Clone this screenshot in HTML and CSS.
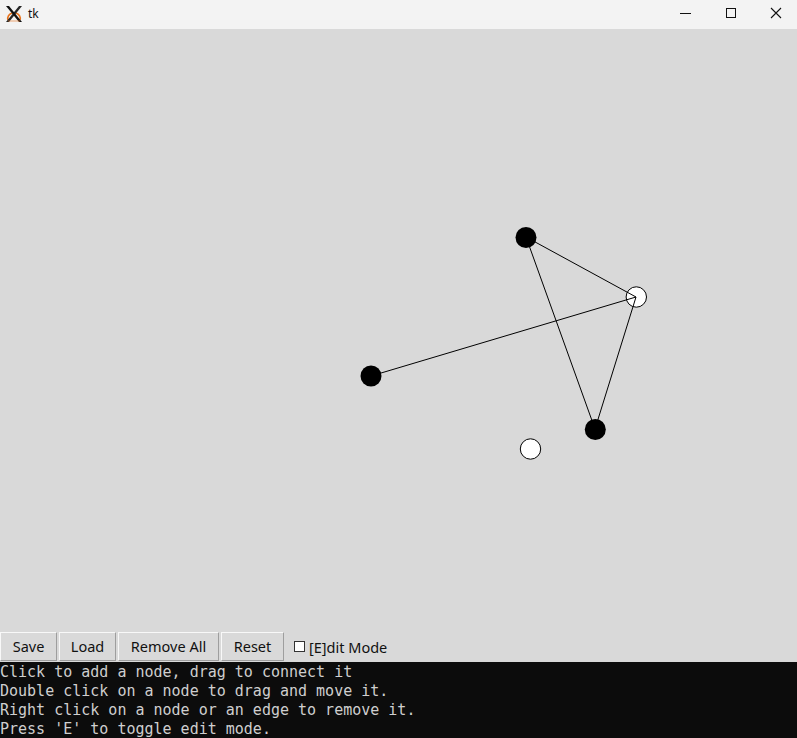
FILE: index.html
```html
<!DOCTYPE html>
<html>
<head>
<meta charset="utf-8">
<link rel="stylesheet" href="styles.css">
</head>
<body>
<div class="window">
  <div class="titlebar">
    <svg class="appicon" width="18" height="18" viewBox="0 0 18 18">
      <path d="M3 15 C 2 12, 4 9, 7 8" stroke="#e8731c" stroke-width="1.6" fill="none"/>
      <path d="M15 15 C 16 12, 14 9, 11 8" stroke="#e8731c" stroke-width="1.6" fill="none"/>
      <path d="M1 1 L4 1 L17 17 L14 17 Z" fill="#111"/>
      <path d="M14 1 L17 1 L4 17 L1 17 Z" fill="#111" opacity="0.9"/>
      <path d="M3 16 L15 16" stroke="#e8731c" stroke-width="1" opacity="0.6"/>
    </svg>
    <span class="title">tk</span>
    <div class="controls">
      <svg class="ctl" width="45" height="29" viewBox="0 0 45 29"><path d="M18 13.5 H29" stroke="#111" stroke-width="1"/></svg>
      <svg class="ctl" width="45" height="29" viewBox="0 0 45 29"><rect x="19.5" y="8.5" width="9" height="9" stroke="#111" fill="none" stroke-width="1"/></svg>
      <svg class="ctl" width="45" height="29" viewBox="0 0 45 29"><path d="M19 8 L29 18 M29 8 L19 18" stroke="#111" stroke-width="1.1"/></svg>
    </div>
  </div>
  <div class="canvas">
    <svg width="797" height="603" viewBox="0 29 797 603">
      <circle cx="636.3" cy="297" r="10.2" fill="#fff" stroke="#000" stroke-width="1"/>
      <circle cx="530.5" cy="449" r="10.2" fill="#fff" stroke="#000" stroke-width="1"/>
      <g stroke="#000" stroke-width="1">
        <line x1="526" y1="237" x2="636" y2="297"/>
        <line x1="526" y1="237" x2="595" y2="429"/>
        <line x1="371" y1="376" x2="636" y2="297"/>
        <line x1="595" y1="429" x2="636" y2="297"/>
      </g>
      <circle cx="526" cy="237.5" r="10.5" fill="#000"/>
      <circle cx="371" cy="376" r="10.5" fill="#000"/>
      <circle cx="595.3" cy="429.5" r="10.5" fill="#000"/>
    </svg>
  </div>
  <div class="toolbar">
    <button class="btn btn-save">Save</button>
    <button class="btn btn-load">Load</button>
    <button class="btn btn-remove">Remove All</button>
    <button class="btn btn-reset">Reset</button>
    <label class="check"><span class="box"></span>[E]dit Mode</label>
  </div>
  <div class="console">
    <div class="line">Click to add a node, drag to connect it</div>
    <div class="line">Double click on a node to drag and move it.</div>
    <div class="line">Right click on a node or an edge to remove it.</div>
    <div class="line">Press 'E' to toggle edit mode.</div>
  </div>
</div>
</body>
</html>
```

FILE: styles.css
```css
html, body {
  margin: 0;
  padding: 0;
  width: 797px;
  height: 738px;
  overflow: hidden;
  background: #d9d9d9;
}
.window {
  display: flex;
  flex-direction: column;
  width: 797px;
  height: 738px;
}
.titlebar {
  height: 29px;
  flex: none;
  background: #f3f3f3;
  display: flex;
  align-items: center;
  font-family: "Noto Sans", "DejaVu Sans", sans-serif;
  font-size: 12px;
  color: #111;
}
.appicon {
  margin-left: 5px;
  margin-top: -2px;
}
.title {
  margin-left: 5px;
  margin-top: -2px;
}
.controls {
  margin-left: auto;
  display: flex;
}
.ctl {
  display: block;
}
.canvas {
  height: 603px;
  flex: none;
  background: #d9d9d9;
}
.canvas svg {
  display: block;
}
.toolbar {
  height: 30px;
  flex: none;
  display: flex;
  align-items: flex-start;
  gap: 2px;
  background: #d9d9d9;
}
.btn {
  height: 29px;
  box-sizing: border-box;
  margin: 0;
  padding: 0 0 1px;
  background: #d9d9d9;
  border-style: solid;
  border-width: 1px;
  border-color: #f8f8f8 #9e9e9e #9e9e9e #f8f8f8;
  font-family: "Noto Sans", "DejaVu Sans", sans-serif;
  font-size: 14.5px;
  color: #111;
}
.btn-save { width: 57px; }
.btn-load { width: 57px; }
.btn-remove { width: 101px; }
.btn-reset { width: 63px; }
.check {
  display: flex;
  align-items: center;
  height: 29px;
  margin-left: 8px;
  font-family: "Noto Sans", "DejaVu Sans", sans-serif;
  font-size: 14.5px;
  color: #111;
}
.box {
  width: 9px;
  height: 9px;
  background: #fff;
  border: 1px solid #333;
  margin-right: 4px;
}
.console {
  flex: 1;
  min-height: 0;
  padding-top: 1px;
  box-sizing: border-box;
  background: #0c0c0c;
  color: #cfcfcf;
  font-family: "DejaVu Sans Mono", monospace;
  font-size: 15px;
  line-height: 19px;
  white-space: nowrap;
  overflow: hidden;
}
.line {
  height: 19px;
}
```
